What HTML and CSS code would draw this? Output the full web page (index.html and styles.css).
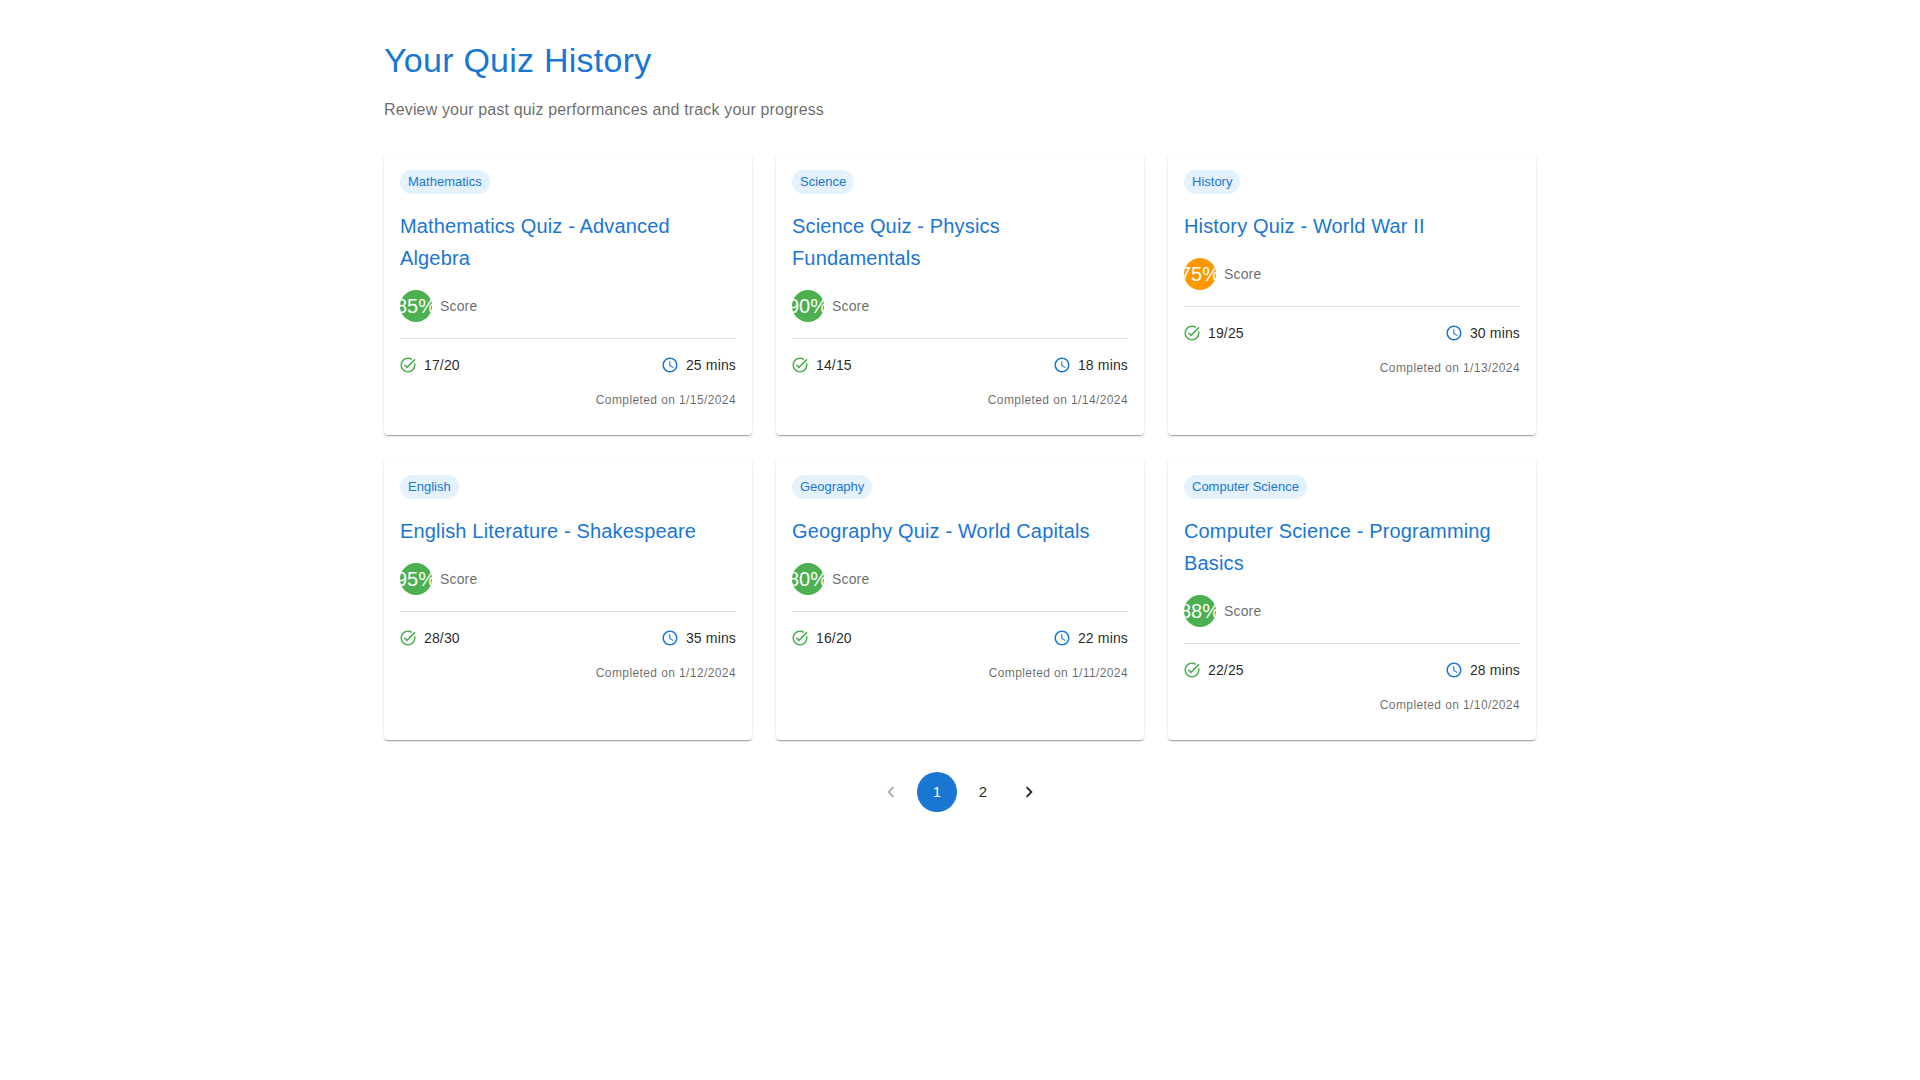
FILE: index.html
```html
<!DOCTYPE html>
<html>
<head>
  <title>Your Quiz History</title>
  <link rel="stylesheet" href="styles.css">
</head>
<body>
  <svg class="icon-defs" width="0" height="0">
    <symbol id="icon-done" viewBox="0 0 24 24"><path d="M22 5.18 10.59 16.6l-4.24-4.24 1.41-1.41 2.83 2.83 10-10L22 5.18zm-2.21 5.04c.13.57.21 1.17.21 1.78 0 4.42-3.58 8-8 8s-8-3.58-8-8 3.58-8 8-8c1.58 0 3.04.46 4.28 1.25l1.44-1.44C16.1 2.67 14.13 2 12 2 6.48 2 2 6.48 2 12s4.48 10 10 10 10-4.48 10-10c0-1.19-.22-2.33-.6-3.39l-1.61 1.61z"/></symbol>
    <symbol id="icon-time" viewBox="0 0 24 24"><path d="M11.99 2C6.47 2 2 6.48 2 12s4.47 10 9.99 10C17.52 22 22 17.52 22 12S17.52 2 11.99 2zM12 20c-4.42 0-8-3.58-8-8s3.58-8 8-8 8 3.58 8 8-3.58 8-8 8zm.5-13H11v6l5.25 3.15.75-1.23-4.5-2.67z"/></symbol>
  </svg>

  <div class="container">
    <h1>Your Quiz History</h1>
    <p class="subtitle">Review your past quiz performances and track your progress</p>

    <div class="quiz-grid">
      <div class="card">
        <span class="chip">Mathematics</span>
        <h2>Mathematics Quiz - Advanced Algebra</h2>
        <div class="score-row"><div class="avatar green">85%</div><span class="score-label">Score</span></div>
        <div class="stats">
          <span class="stat"><svg class="icon done"><use href="#icon-done"/></svg>17/20</span>
          <span class="stat"><svg class="icon time"><use href="#icon-time"/></svg>25 mins</span>
        </div>
        <p class="completed">Completed on 1/15/2024</p>
      </div>

      <div class="card">
        <span class="chip">Science</span>
        <h2>Science Quiz - Physics Fundamentals</h2>
        <div class="score-row"><div class="avatar green">90%</div><span class="score-label">Score</span></div>
        <div class="stats">
          <span class="stat"><svg class="icon done"><use href="#icon-done"/></svg>14/15</span>
          <span class="stat"><svg class="icon time"><use href="#icon-time"/></svg>18 mins</span>
        </div>
        <p class="completed">Completed on 1/14/2024</p>
      </div>

      <div class="card">
        <span class="chip">History</span>
        <h2>History Quiz - World War II</h2>
        <div class="score-row"><div class="avatar orange">75%</div><span class="score-label">Score</span></div>
        <div class="stats">
          <span class="stat"><svg class="icon done"><use href="#icon-done"/></svg>19/25</span>
          <span class="stat"><svg class="icon time"><use href="#icon-time"/></svg>30 mins</span>
        </div>
        <p class="completed">Completed on 1/13/2024</p>
      </div>

      <div class="card">
        <span class="chip">English</span>
        <h2>English Literature - Shakespeare</h2>
        <div class="score-row"><div class="avatar green">95%</div><span class="score-label">Score</span></div>
        <div class="stats">
          <span class="stat"><svg class="icon done"><use href="#icon-done"/></svg>28/30</span>
          <span class="stat"><svg class="icon time"><use href="#icon-time"/></svg>35 mins</span>
        </div>
        <p class="completed">Completed on 1/12/2024</p>
      </div>

      <div class="card">
        <span class="chip">Geography</span>
        <h2>Geography Quiz - World Capitals</h2>
        <div class="score-row"><div class="avatar green">80%</div><span class="score-label">Score</span></div>
        <div class="stats">
          <span class="stat"><svg class="icon done"><use href="#icon-done"/></svg>16/20</span>
          <span class="stat"><svg class="icon time"><use href="#icon-time"/></svg>22 mins</span>
        </div>
        <p class="completed">Completed on 1/11/2024</p>
      </div>

      <div class="card">
        <span class="chip">Computer Science</span>
        <h2>Computer Science - Programming Basics</h2>
        <div class="score-row"><div class="avatar green">88%</div><span class="score-label">Score</span></div>
        <div class="stats">
          <span class="stat"><svg class="icon done"><use href="#icon-done"/></svg>22/25</span>
          <span class="stat"><svg class="icon time"><use href="#icon-time"/></svg>28 mins</span>
        </div>
        <p class="completed">Completed on 1/10/2024</p>
      </div>
    </div>

    <nav class="pagination">
      <button class="page-btn disabled"><svg viewBox="0 0 24 24"><path d="M15.41 7.41 14 6l-6 6 6 6 1.41-1.41L10.83 12z"/></svg></button>
      <button class="page-btn active">1</button>
      <button class="page-btn">2</button>
      <button class="page-btn"><svg viewBox="0 0 24 24"><path d="M10 6 8.59 7.41 13.17 12l-4.58 4.59L10 18l6-6z"/></svg></button>
    </nav>
  </div>
</body>
</html>
```
FILE: styles.css
```css
body {
  margin: 0;
  font-family: "Liberation Sans", Arial, sans-serif;
  background-color: #ffffff;
  color: rgba(0, 0, 0, 0.87);
}

.icon-defs {
  display: block;
  height: 0;
}

.container {
  width: 1152px;
  margin: 0 auto;
  padding-top: 39px;
}

h1 {
  margin: 0 0 17px;
  font-size: 34px;
  font-weight: 400;
  line-height: 42px;
  letter-spacing: 0.25px;
  color: #1976d2;
}

.subtitle {
  margin: 0 0 32px;
  font-size: 16px;
  line-height: 24px;
  letter-spacing: 0.15px;
  color: rgba(0, 0, 0, 0.6);
}

.quiz-grid {
  display: grid;
  grid-template-columns: repeat(3, 1fr);
  gap: 24px;
}

.card {
  padding: 16px;
  height: 281px;
  box-sizing: border-box;
  background-color: #ffffff;
  border-radius: 4px;
  box-shadow: 0 2px 1px -1px rgba(0, 0, 0, 0.2), 0 1px 1px 0 rgba(0, 0, 0, 0.14), 0 1px 3px 0 rgba(0, 0, 0, 0.12);
}

.chip {
  display: inline-block;
  height: 24px;
  padding: 0 8px;
  font-size: 13px;
  line-height: 24px;
  color: #1976d2;
  background-color: #e3f2fd;
  border-radius: 12px;
  vertical-align: top;
}

h2 {
  margin: 16px 0;
  font-size: 20px;
  font-weight: 400;
  line-height: 32px;
  letter-spacing: 0.15px;
  color: #1976d2;
}

.score-row {
  display: flex;
  align-items: center;
  gap: 8px;
  padding-bottom: 16px;
  border-bottom: 1px solid #e0e0e0;
}

.avatar {
  display: flex;
  justify-content: center;
  align-items: center;
  flex-shrink: 0;
  width: 32px;
  height: 32px;
  overflow: hidden;
  font-size: 20px;
  color: #ffffff;
  border-radius: 50%;
}

.green {
  background-color: #4caf50;
}

.orange {
  background-color: #ff9800;
}

.score-label {
  font-size: 14px;
  line-height: 20px;
  letter-spacing: 0.15px;
  color: rgba(0, 0, 0, 0.6);
}

.stats {
  display: flex;
  justify-content: space-between;
  margin-top: 16px;
}

.stat {
  display: flex;
  align-items: center;
  gap: 8px;
  font-size: 14px;
  line-height: 20px;
  letter-spacing: 0.15px;
}

.icon {
  width: 18px;
  height: 18px;
  margin: 0 -1px;
  fill: currentColor;
}

.done {
  color: #4caf50;
}

.time {
  color: #1976d2;
}

.completed {
  margin: 15px 0 0;
  font-size: 12px;
  line-height: 20px;
  letter-spacing: 0.4px;
  text-align: right;
  color: rgba(0, 0, 0, 0.6);
}

.pagination {
  display: flex;
  justify-content: center;
  gap: 6px;
  margin-top: 32px;
}

.page-btn {
  display: flex;
  justify-content: center;
  align-items: center;
  width: 40px;
  height: 40px;
  padding: 0;
  font-family: inherit;
  font-size: 15px;
  line-height: 1.43;
  letter-spacing: 0.15px;
  color: rgba(0, 0, 0, 0.87);
  background: none;
  border: none;
  border-radius: 50%;
}

.page-btn svg {
  width: 22px;
  height: 22px;
  fill: currentColor;
}

.page-btn.active {
  color: #ffffff;
  background-color: #1976d2;
}

.page-btn.disabled {
  opacity: 0.38;
}
```
